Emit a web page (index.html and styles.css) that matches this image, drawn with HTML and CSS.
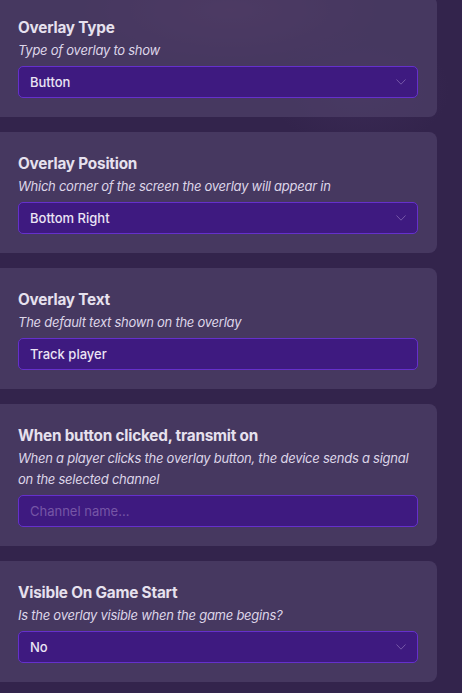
FILE: index.html
```html
<!DOCTYPE html>
<html>
<head>
<meta charset="utf-8">
<link rel="stylesheet" href="styles.css">
</head>
<body>
<div class="panel">
  <section class="card">
    <h2 class="title">Overlay Type</h2>
    <p class="desc">Type of overlay to show</p>
    <div class="field select"><span>Button</span><svg class="chev" viewBox="0 0 10 6"><path d="M0.5 0.5 L5 5.2 L9.5 0.5"/></svg></div>
  </section>
  <section class="card">
    <h2 class="title">Overlay Position</h2>
    <p class="desc">Which corner of the screen the overlay will appear in</p>
    <div class="field select"><span>Bottom Right</span><svg class="chev" viewBox="0 0 10 6"><path d="M0.5 0.5 L5 5.2 L9.5 0.5"/></svg></div>
  </section>
  <section class="card">
    <h2 class="title">Overlay Text</h2>
    <p class="desc">The default text shown on the overlay</p>
    <div class="field"><span>Track player</span></div>
  </section>
  <section class="card">
    <h2 class="title">When button clicked, transmit on</h2>
    <p class="desc">When a player clicks the overlay button, the device sends a signal on the selected channel</p>
    <div class="field"><span class="placeholder">Channel name...</span></div>
  </section>
  <section class="card">
    <h2 class="title">Visible On Game Start</h2>
    <p class="desc">Is the overlay visible when the game begins?</p>
    <div class="field select"><span>No</span><svg class="chev" viewBox="0 0 10 6"><path d="M0.5 0.5 L5 5.2 L9.5 0.5"/></svg></div>
  </section>
</div>
</body>
</html>
```
FILE: styles.css
```css
html, body {
  margin: 0;
  padding: 0;
}
body {
  background: #33244c;
  font-family: Inter, "Noto Sans", sans-serif;
  width: 462px;
  height: 693px;
  overflow: hidden;
  background-image:
    radial-gradient(ellipse 160px 60px at 230px 10px, rgba(120, 60, 110, 0.35), transparent),
    radial-gradient(ellipse 90px 60px at 360px 90px, rgba(80, 60, 110, 0.25), transparent);
}
.panel {
  width: 437px;
  margin-top: -4px;
  display: flex;
  flex-direction: column;
  gap: 15px;
}
.card {
  background: rgba(78, 64, 104, 0.72);
  border-radius: 0 8px 8px 0;
  padding: 20px 19px 19px 18px;
}
.title {
  margin: 0;
  font-size: 15.3px;
  line-height: 24px;
  font-weight: 650;
  color: #e6e1ee;
  letter-spacing: -0.2px;
}
.desc {
  margin: 0;
  font-size: 13px;
  line-height: 21px;
  font-style: italic;
  color: #ddd5e8;
  letter-spacing: -0.25px;
}
.field {
  margin-top: 5px;
  height: 32px;
  box-sizing: border-box;
  background: #3e1a80;
  border: 1px solid #6530cc;
  border-radius: 5px;
  padding: 0 11px;
  display: flex;
  align-items: center;
  justify-content: space-between;
  font-size: 13px;
  font-weight: 500;
  color: #ebe4f4;
}
.placeholder {
  color: #7656a6;
  font-weight: 400;
}
.chev {
  width: 10px;
  height: 6px;
  fill: none;
  stroke: #7658a8;
  stroke-width: 1;
}
```
